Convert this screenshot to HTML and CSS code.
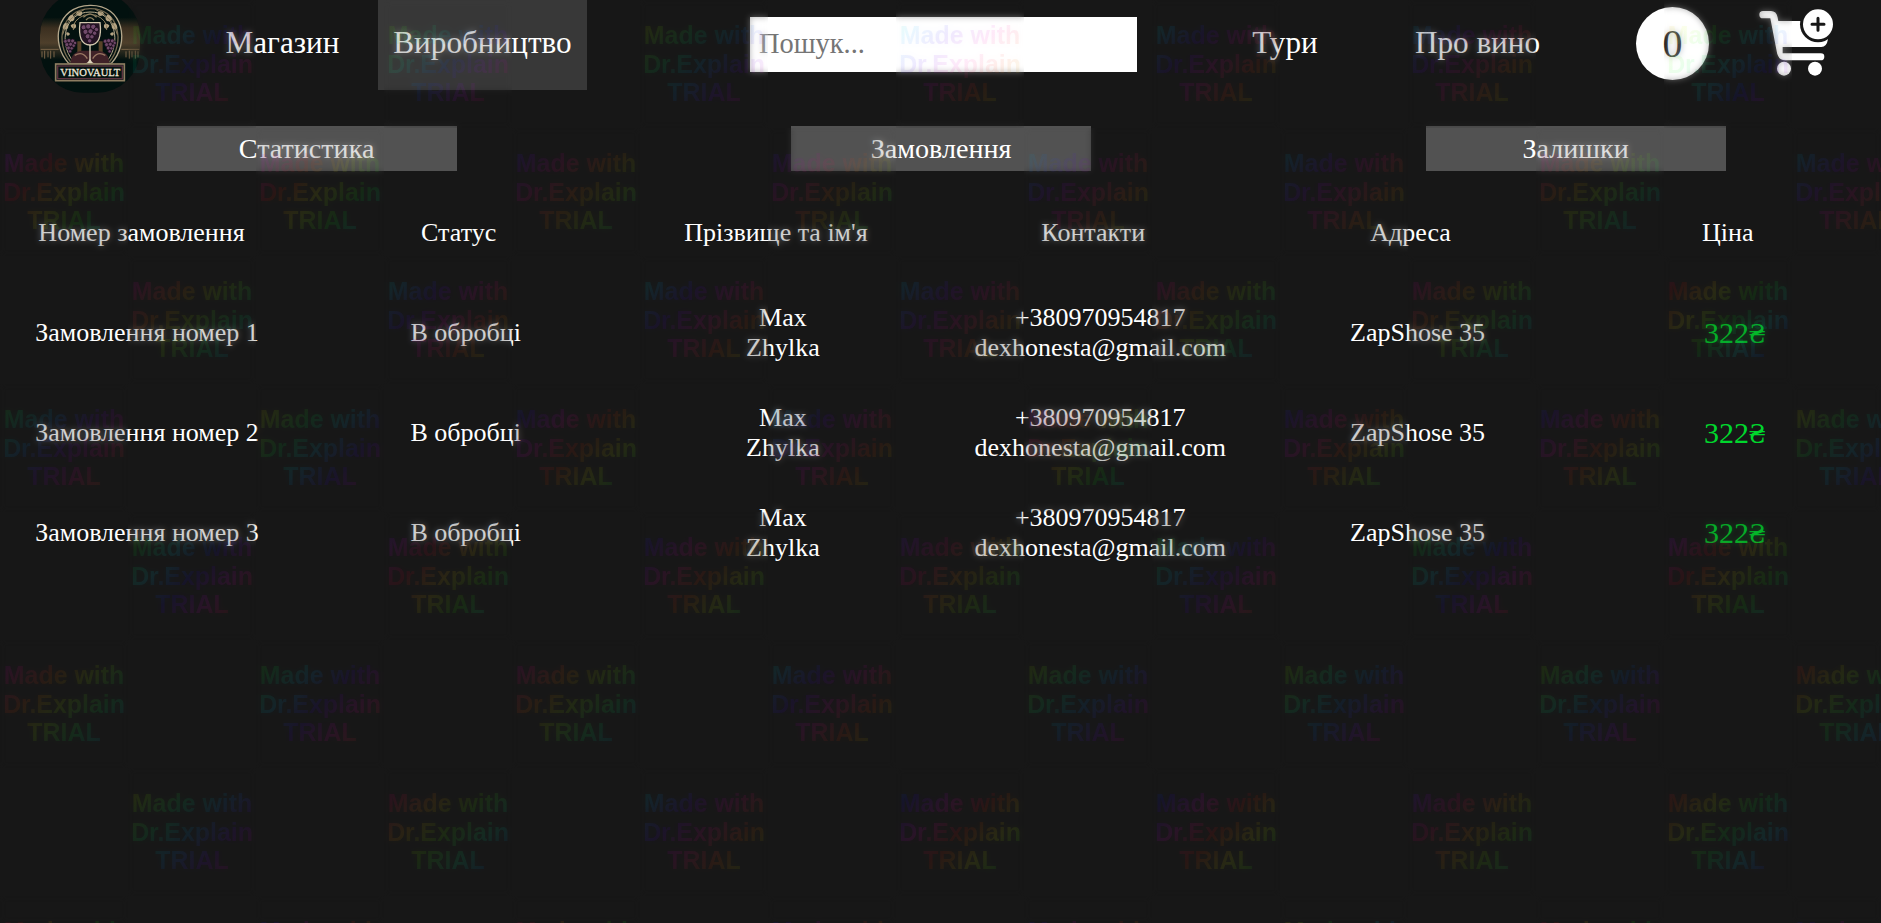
FILE: index.html
```html
<!DOCTYPE html>
<html lang="uk">
<head>
<meta charset="utf-8">
<title>VinoVault</title>
<link rel="stylesheet" href="styles.css">
</head>
<body>
<header class="header">
  <svg class="logo" viewBox="0 0 360 300">
    <defs>
      <clipPath id="badge"><rect x="30" y="-22" width="300" height="300" rx="128"/></clipPath>
      <linearGradient id="wall" x1="0" y1="0" x2="0" y2="1">
        <stop offset="0" stop-color="#02110f"/><stop offset=".25" stop-color="#3b2f20"/>
        <stop offset=".6" stop-color="#4e3f2b"/><stop offset="1" stop-color="#02110f"/>
      </linearGradient>
      <g id="bunch" fill="#70496a" stroke="#1c0d1c" stroke-width="2">
        <circle cx="-13" cy="0" r="6"/><circle cx="-3" cy="-2" r="6"/><circle cx="8" cy="-1" r="6"/><circle cx="15" cy="5" r="5"/>
        <circle cx="-9" cy="10" r="6"/><circle cx="2" cy="9" r="6"/><circle cx="11" cy="13" r="5"/>
        <circle cx="-4" cy="20" r="6"/><circle cx="5" cy="21" r="5"/><circle cx="0" cy="30" r="5"/>
      </g>
      <g id="vine" fill="#b5a483">
        <path d="M98 84q0-12 10-16q12 8 4 18q-8 6-14-2zM114 60q0-14 14-16q10 10 2 18q-8 5-16-2zM122 76q8-8 16-2q2 12-8 12q-8-2-8-10zM138 40q6-10 18-4q2 10-6 12q-10 0-12-8zM108 98q8-4 12 4q-4 8-10 4z"/>
        <path d="M98 104q10-50 66-76M130 90q-4-30 36-46" fill="none" stroke="#8f8061" stroke-width="3"/>
      </g>
    </defs>
    <g clip-path="url(#badge)">
      <rect x="20" y="-22" width="320" height="310" fill="#02110f"/>
      <rect x="30" y="52" width="68" height="128" fill="url(#wall)"/>
      <rect x="262" y="52" width="68" height="128" fill="url(#wall)"/>
      <path d="M32 148h54M36 154v18M44 152v24M54 154v18M62 152v24M72 154v18M274 148h54M288 154v18M298 152v24M306 154v18M316 152v24M324 154v18" fill="none" stroke="#7b6549" stroke-width="3"/>
      <path d="M116 190C60 130 78 18 180 16S300 130 244 190z" fill="#03110f" stroke="#b3a68a" stroke-width="4"/>
      <path d="M122 186C74 130 92 28 180 26S286 130 238 186" fill="none" stroke="#746950" stroke-width="4"/>
      <path d="M128 182C86 128 102 37 180 36S274 128 232 182" fill="none" stroke="#b9ac8e" stroke-width="3"/>
      <path d="M160 52q20-20 40 0M168 60q12-14 24 0" fill="none" stroke="#8f8061" stroke-width="4"/>
      <use href="#vine"/><use href="#vine" transform="translate(360 0) scale(-1 1)"/>
      <path d="M142 158v-34h12v34zM206 158v-34h12v34z" fill="#584228"/>
      <path d="M122 190q0-34 34-38h48q34 4 34 38z" fill="#402228"/>
      <path d="M134 166q24-14 38 10M226 166q-24-14-38 10" fill="none" stroke="#9b7864" stroke-width="4"/>
      <use href="#bunch" transform="translate(120 124)"/><use href="#bunch" transform="translate(239 124)"/>
      <path d="M150 68h60q8 66-30 67q-38-1-30-67z" fill="#241424" stroke="#d0c6ac" stroke-width="4"/>
      <use href="#bunch" transform="translate(179 82) scale(1.35)"/>
      <path d="M180 135v50M158 194q20-2 22-16q2 14 22 16z" fill="#ded4bb" stroke="#ded4bb" stroke-width="4"/>
      <rect x="77" y="192" width="206" height="50" fill="#071412" stroke="#8d7d61" stroke-width="5"/>
      <rect x="83" y="198" width="194" height="38" fill="none" stroke="#5a3340" stroke-width="4"/>
      <text class="logo-text" x="91" y="229" textLength="180" lengthAdjust="spacingAndGlyphs">VINOVAULT</text>
    </g>
  </svg>
  <nav class="nav">
    <a class="nav-link nav-shop">Магазин</a>
    <a class="nav-link nav-active">Виробництво</a>
  </nav>
  <input class="search" type="text" placeholder="Пошук...">
  <a class="nav-link nav-tours">Тури</a>
  <a class="nav-link nav-about">Про вино</a>
  <span class="count">0</span>
  <svg class="cart" viewBox="414 0 228 240">
    <path d="M429 44H453Q460 44 462 54L482 158Q485 170 496 170H602" fill="none" stroke="#fff" stroke-width="22" stroke-linecap="round" stroke-linejoin="round"/>
    <path d="M464 63H560L624 118Q620 141 604 141H480z" fill="#fff"/>
    <path d="M488 150.500H620" stroke="#171717" stroke-width="19"/>
    <circle cx="594" cy="73" r="54" fill="#171717"/>
    <circle cx="594" cy="73" r="45" fill="#fff"/>
    <path d="M576 73H612M594 55V91" stroke="#171717" stroke-width="9" stroke-linecap="round"/>
    <circle cx="492" cy="206" r="21" fill="#fff"/><circle cx="585" cy="206" r="21" fill="#fff"/>
  </svg>
</header>

<div class="tabs">
  <button class="tab">Статистика</button>
  <button class="tab">Замовлення</button>
  <button class="tab">Залишки</button>
</div>

<main class="orders">
  <div class="row row-head">
    <span>Номер замовлення</span><span>Статус</span><span>Прізвище та ім'я</span><span>Контакти</span><span>Адреса</span><span>Ціна</span>
  </div>
  <div class="row">
    <span>Замовлення номер 1</span><span>В обробці</span><span>Max<br>Zhylka</span><span>+380970954817<br>dexhonesta@gmail.com</span><span>ZapShose 35</span><span class="price">322₴</span>
  </div>
  <div class="row">
    <span>Замовлення номер 2</span><span>В обробці</span><span>Max<br>Zhylka</span><span>+380970954817<br>dexhonesta@gmail.com</span><span>ZapShose 35</span><span class="price">322₴</span>
  </div>
  <div class="row">
    <span>Замовлення номер 3</span><span>В обробці</span><span>Max<br>Zhylka</span><span>+380970954817<br>dexhonesta@gmail.com</span><span>ZapShose 35</span><span class="price">322₴</span>
  </div>
</main>

<div class="marks" id="marks"></div>
<script src="marks.js"></script>
</body>
</html>
```
FILE: styles.css
```css
* { box-sizing: border-box; }

body {
  margin: 0;
  height: 923px;
  overflow: hidden;
  background: #171717;
  color: #fff;
  font-family: "Liberation Serif", "Times New Roman", serif;
}

.header {
  display: flex;
  align-items: flex-start;
  height: 90px;
}

.logo { flex: none; width: 120px; height: 100px; margin-left: 30px; }
.logo-text { font: 34px "Liberation Serif", serif; fill: #f0eadc; stroke: #f0eadc; stroke-width: .8px; }

.nav { display: flex; margin-left: 60px; }

.nav-link {
  flex: none;
  height: 90px;
  font-size: 31.2px;
  line-height: 85px;
  text-align: center;
  white-space: nowrap;
}
.nav-shop { width: 145px; margin-right: 23px; }
.nav-active { width: 209px; background: #383838; }
.nav-tours { width: 96px; margin-left: 100px; }
.nav-about { width: 155px; margin-left: 67px; }

.search {
  flex: none;
  width: 387px;
  height: 55px;
  margin: 17px 0 0 163px;
  padding: 0 9px 2px;
  border: 0;
  background: #fff;
  font: 28.4px "Liberation Serif", "Times New Roman", serif;
}
.search::placeholder { color: #757575; }

.count {
  flex: none;
  width: 73px;
  height: 73px;
  margin: 7px 0 0 81px;
  border-radius: 50%;
  background: #fff;
  color: #171717;
  font-size: 40px;
  line-height: 73px;
  text-align: center;
}

.cart { flex: none; width: 76px; height: 80px; margin-left: 49px; }

.tabs {
  display: grid;
  grid-template-columns: 300px 300px 300px;
  column-gap: 334.5px;
  padding: 36px 0 0 156.6px;
}
.tab {
  height: 45px;
  padding: 0;
  border: 0;
  background: #525252;
  color: #fff;
  font: 28.1px/43px "Liberation Serif", "Times New Roman", serif;
}

.orders { padding-top: 12px; }
.row {
  display: grid;
  grid-template-columns: 300px repeat(5, 317.3px);
  align-items: center;
  height: 100px;
  margin-left: 7px;
  font-size: 26px;
  line-height: 30px;
  text-align: center;
  white-space: nowrap;
}
.row > :first-child { padding-right: 20px; }
.row-head { margin-left: 0; }
.row-head > :first-child { padding-right: 17px; }
.price { color: #00d72d; font-size: 30px; }

/* Tiled trial marks lie over the whole page */
.marks {
  position: absolute;
  inset: 0;
  display: grid;
  grid-template-columns: repeat(15, 128px);
  grid-auto-rows: 128px;
  height: 923px;
  overflow: hidden;
  pointer-events: none;
}
.mark {
  display: grid;
  font: bold 24.9px/28.5px "Liberation Sans", Arial, sans-serif;
  text-align: center;
}
.mark::before {
  content: "";
  grid-area: 1 / 1;
  backdrop-filter: blur(3px);
  opacity: .33;
}
.mark-text {
  grid-area: 1 / 1;
  padding-top: 21px;
  color: transparent;
  background: linear-gradient(135deg,
    hsl(var(--hue) 100% 50% / .1),
    hsl(calc(var(--hue) + 60) 100% 50% / .1),
    hsl(calc(var(--hue) + 120) 100% 50% / .1),
    hsl(calc(var(--hue) + 180) 100% 50% / .1),
    hsl(calc(var(--hue) + 240) 100% 50% / .1),
    hsl(calc(var(--hue) + 300) 100% 50% / .1),
    hsl(calc(var(--hue) + 360) 100% 50% / .1));
  -webkit-background-clip: text;
  background-clip: text;
}
```
FILE: marks.js
```js
// Hue at the first letter of each mark, row by row; rows alternate their offset.
const hues = [
  [110, 90, 70, 180, 180, 190, 50],
  [280, 290, 250, 250, 190, 190, 310, 190],
  [310, 180, 180, 190, 310, 310, 345],
  [130, 60, 235, 180, 290, 240, 240, 60],
  [110, 275, 240, 260, 120, 110, 280],
  [305, 120, 310, 180, 75, 80, 85, 0],
  [70, 325, 185, 230, 230, 260, 355],
  [340, 240, 330, 240, 240, 60, 340, 240],
];
const marks = document.getElementById('marks');
hues.forEach((row, r) => {
  row.forEach((hue, i) => {
    const mark = document.createElement('div');
    mark.className = 'mark';
    mark.style.gridArea = `${r + 1} / ${i * 2 + (r % 2 ? 1 : 2)}`;
    mark.style.setProperty('--hue', hue - 45);
    mark.innerHTML = '<div class="mark-text">Made with<br>Dr.Explain<br>TRIAL</div>';
    marks.append(mark);
  });
});
```
